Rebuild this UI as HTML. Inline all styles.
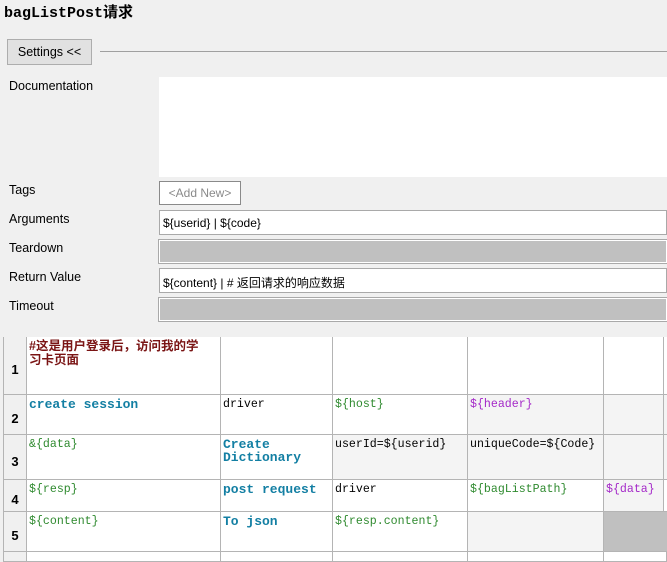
<!DOCTYPE html>
<html><head><meta charset="utf-8"><style>
body{margin:0;width:667px;height:555px;background:#f0f0f0;position:relative;overflow:hidden;font-family:"Liberation Sans","Noto Sans CJK SC",sans-serif;font-size:12.5px;color:#000}
.a{position:absolute}
.lbl{left:9px}
.box{position:absolute;left:159px;right:0;border:1px solid #a9a9a9;box-sizing:border-box;background:#fff;padding:5px 3px 3px;font-size:12px}
.grey{background:#c0c0c0;border:1px solid #fff;box-shadow:0 0 0 1px #a9a9a9}
.c{position:absolute;box-sizing:border-box;border-right:1px solid #b4b4b4;border-bottom:1px solid #b4b4b4;background:#fff;font-family:"Liberation Mono","Noto Sans CJK SC",monospace;font-size:11.6px;padding:3px 2px;line-height:13px;overflow:hidden;white-space:nowrap}
.n{background:#f0f0f0;font-family:"Liberation Sans",sans-serif;font-weight:bold;font-size:13px;text-align:center;padding:0;display:flex;align-items:center;justify-content:center;padding-top:8px;border-left:1px solid #b4b4b4}
.kw{color:#137fa3;font-weight:bold;font-size:13px}
.g{color:#2f8a2f}
.p{color:#a428c8}
.cm{color:#7a1414;font-weight:bold;white-space:normal;font-family:"Liberation Sans","Noto Sans CJK SC",sans-serif;font-size:12.5px}
.lg{background:#f4f4f4}
.dg{background:#c0c0c0}
</style></head><body>
<div class="a" style="left:4px;top:1px;font-family:'Liberation Mono','Noto Sans CJK SC',monospace;font-weight:bold;font-size:15px">bagListPost请求</div>
<div class="a" style="left:7px;top:39px;width:85px;height:26px;box-sizing:border-box;border:1px solid #adadad;background:#e1e1e1;font-size:12.5px;line-height:24px;text-align:center">Settings &lt;&lt;</div>
<div class="a" style="left:100px;top:51px;right:0;height:1px;background:#a0a0a0"></div>
<div class="a lbl" style="top:79px">Documentation</div>
<div class="a" style="left:159px;top:77px;right:0;height:100px;background:#fff"></div>
<div class="a lbl" style="top:183px">Tags</div>
<div class="a" style="left:159px;top:181px;width:82px;height:24px;box-sizing:border-box;border:1px solid #8a8a8a;background:#fff;color:#8a8a8a;font-size:12px;line-height:22px;text-align:center">&lt;Add New&gt;</div>
<div class="a lbl" style="top:212px">Arguments</div>
<div class="box" style="top:210px;height:25px">${userid} | ${code}</div>
<div class="a lbl" style="top:241px">Teardown</div>
<div class="box grey" style="top:240px;height:23px"></div>
<div class="a lbl" style="top:270px">Return Value</div>
<div class="box" style="top:268px;height:25px">${content} | # 返回请求的响应数据</div>
<div class="a lbl" style="top:299px">Timeout</div>
<div class="box grey" style="top:298px;height:23px"></div>

<!-- row1 -->
<div class="c n" style="left:3px;top:337px;width:24px;height:58px">1</div>
<div class="c" style="left:27px;top:337px;width:194px;height:58px"><span class="cm">#这是用户登录后，访问我的学<br>习卡页面</span></div>
<div class="c" style="left:221px;top:337px;width:112px;height:58px"></div>
<div class="c" style="left:333px;top:337px;width:135px;height:58px"></div>
<div class="c" style="left:468px;top:337px;width:136px;height:58px"></div>
<div class="c" style="left:604px;top:337px;width:60px;height:58px"></div>
<div class="c" style="left:664px;top:337px;width:10px;height:58px"></div>
<!-- row2 -->
<div class="c n" style="left:3px;top:395px;width:24px;height:40px">2</div>
<div class="c kw" style="left:27px;top:395px;width:194px;height:40px">create session</div>
<div class="c" style="left:221px;top:395px;width:112px;height:40px">driver</div>
<div class="c g" style="left:333px;top:395px;width:135px;height:40px">${host}</div>
<div class="c p lg" style="left:468px;top:395px;width:136px;height:40px">${header}</div>
<div class="c lg" style="left:604px;top:395px;width:60px;height:40px"></div>
<div class="c lg" style="left:664px;top:395px;width:10px;height:40px"></div>
<!-- row3 -->
<div class="c n" style="left:3px;top:435px;width:24px;height:45px">3</div>
<div class="c g" style="left:27px;top:435px;width:194px;height:45px">&amp;{data}</div>
<div class="c kw" style="left:221px;top:435px;width:112px;height:45px">Create<br>Dictionary</div>
<div class="c lg" style="left:333px;top:435px;width:135px;height:45px">userId=${userid}</div>
<div class="c lg" style="left:468px;top:435px;width:136px;height:45px">uniqueCode=${Code}</div>
<div class="c lg" style="left:604px;top:435px;width:60px;height:45px"></div>
<div class="c lg" style="left:664px;top:435px;width:10px;height:45px"></div>
<!-- row4 -->
<div class="c n" style="left:3px;top:480px;width:24px;height:32px">4</div>
<div class="c g" style="left:27px;top:480px;width:194px;height:32px">${resp}</div>
<div class="c kw" style="left:221px;top:480px;width:112px;height:32px">post request</div>
<div class="c" style="left:333px;top:480px;width:135px;height:32px">driver</div>
<div class="c g" style="left:468px;top:480px;width:136px;height:32px">${bagListPath}</div>
<div class="c p lg" style="left:604px;top:480px;width:60px;height:32px">${data}</div>
<div class="c" style="left:664px;top:480px;width:10px;height:32px"></div>
<!-- row5 -->
<div class="c n" style="left:3px;top:512px;width:24px;height:40px">5</div>
<div class="c g" style="left:27px;top:512px;width:194px;height:40px">${content}</div>
<div class="c kw" style="left:221px;top:512px;width:112px;height:40px">To json</div>
<div class="c g" style="left:333px;top:512px;width:135px;height:40px">${resp.content}</div>
<div class="c lg" style="left:468px;top:512px;width:136px;height:40px"></div>
<div class="c dg" style="left:604px;top:512px;width:63px;height:40px;border-right:none"></div>
<!-- row6 -->
<div class="c n" style="left:3px;top:552px;width:24px;height:10px"></div>
<div class="c" style="left:27px;top:552px;width:194px;height:10px"></div>
<div class="c" style="left:221px;top:552px;width:112px;height:10px"></div>
<div class="c" style="left:333px;top:552px;width:135px;height:10px"></div>
<div class="c" style="left:468px;top:552px;width:136px;height:10px"></div>
<div class="c" style="left:604px;top:552px;width:63px;height:10px"></div>
</body></html>
